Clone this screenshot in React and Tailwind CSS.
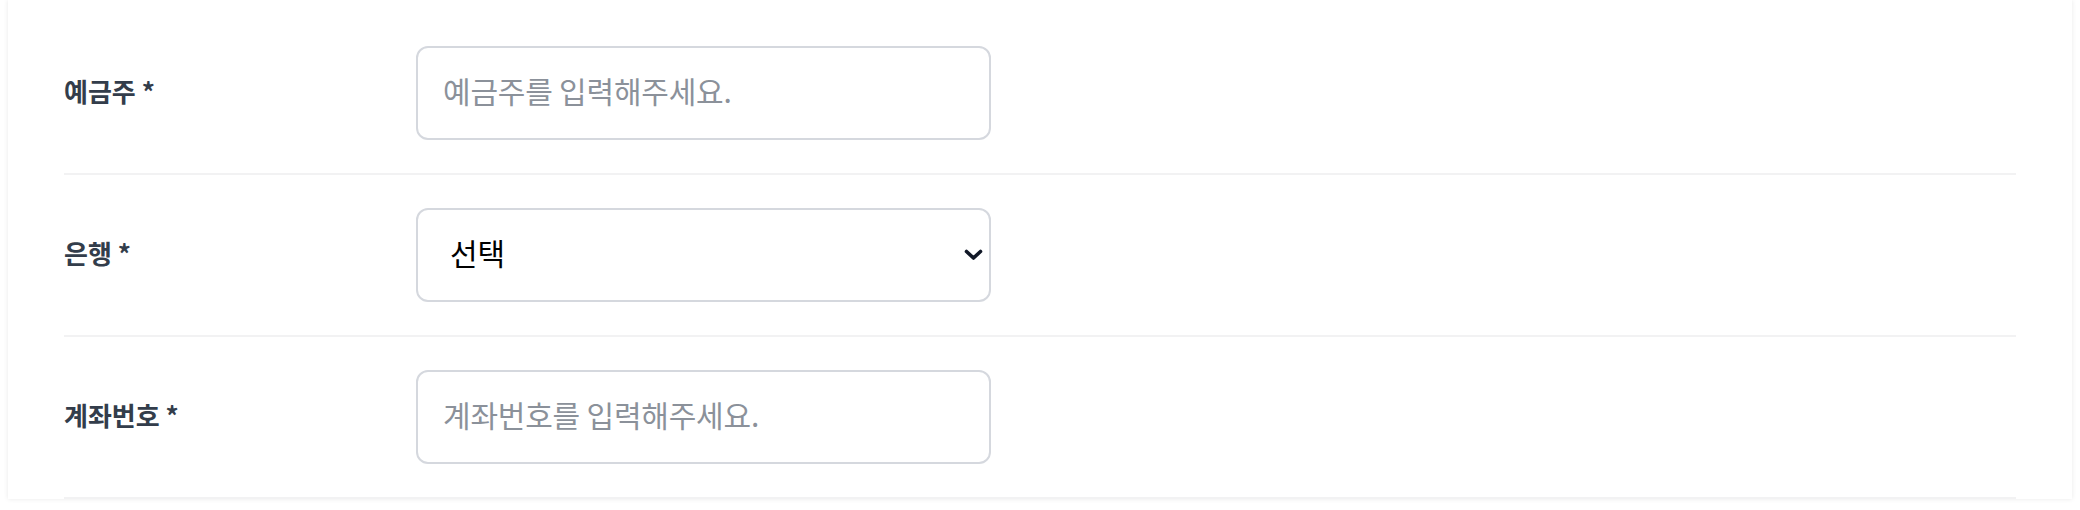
import React, { useState } from 'react';

const fontStack = '"Noto Sans CJK KR", "Noto Sans", sans-serif';

const FieldRow = ({ label, children }) => (
  <div className="flex items-center py-[33px] border-b-2 border-[#f2f2f3]">
    <label className="w-[352px] shrink-0 pb-[5px] text-[26px] font-bold text-[#333d4b]">
      {label} *
    </label>
    {children}
  </div>
);

const inputClass =
  'w-[575px] h-[94px] rounded-xl border-2 border-[#d5d8de] bg-white px-[25px] pb-[6px] text-[30px] tracking-[-0.2px] text-[#111] placeholder:text-[#8b919a] outline-none';

const App = () => {
  const [holder, setHolder] = useState('');
  const [bank, setBank] = useState('');
  const [account, setAccount] = useState('');

  return (
    <div className="min-h-screen bg-white px-2" style={{ fontFamily: fontStack }}>
      <div className="bg-white px-14 pt-[13px] shadow-[0_0_5px_rgba(0,0,0,0.09)]">
        <FieldRow label="예금주">
          <input
            className={inputClass}
            placeholder="예금주를 입력해주세요."
            value={holder}
            onChange={(e) => setHolder(e.target.value)}
          />
        </FieldRow>

        <FieldRow label="은행">
          <div className="relative">
            <select
              className="w-[575px] h-[94px] appearance-none rounded-xl border-2 border-[#d5d8de] bg-white pl-[32px] pr-12 pb-[6px] text-[30px] text-black outline-none"
              value={bank}
              onChange={(e) => setBank(e.target.value)}
            >
              <option value="">선택</option>
              <option value="kb">국민은행</option>
              <option value="shinhan">신한은행</option>
              <option value="woori">우리은행</option>
              <option value="hana">하나은행</option>
            </select>
            {/* chevron for the select */}
            <svg
              className="pointer-events-none absolute right-[8px] top-1/2 -translate-y-1/2"
              width="19"
              height="12"
              viewBox="0 0 19 12"
              fill="none"
            >
              <path d="M2.5 2.5 L9.5 9 L16.5 2.5" stroke="#111827" strokeWidth="3.6" strokeLinecap="round" strokeLinejoin="round" />
            </svg>
          </div>
        </FieldRow>

        <FieldRow label="계좌번호">
          <input
            className={inputClass}
            placeholder="계좌번호를 입력해주세요."
            value={account}
            onChange={(e) => setAccount(e.target.value)}
          />
        </FieldRow>
      </div>
    </div>
  );
};

export default App;
